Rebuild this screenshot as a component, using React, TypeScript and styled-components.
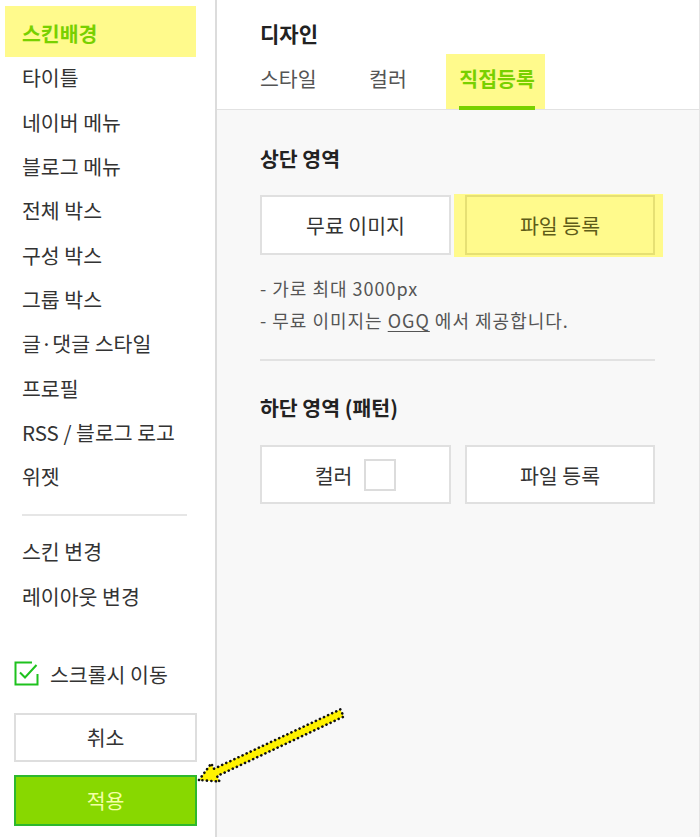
import React from "react";
import styled, { createGlobalStyle, css } from "styled-components";

const GlobalStyle = createGlobalStyle`
  html, body {
    margin: 0;
    padding: 0;
    background: #ffffff;
  }
  body {
    font-family: "Noto Sans CJK KR", "Noto Sans", sans-serif;
    color: #333333;
  }
  * {
    box-sizing: border-box;
  }
`;

const GREEN = "#78d000";
const MARK = "#fffa8c";

const mainMenu = [
  "스킨배경",
  "타이틀",
  "네이버 메뉴",
  "블로그 메뉴",
  "전체 박스",
  "구성 박스",
  "그룹 박스",
  "글·댓글 스타일",
  "프로필",
  "RSS / 블로그 로고",
  "위젯",
];

const subMenu = ["스킨 변경", "레이아웃 변경"];

const tabs = ["스타일", "컬러", "직접등록"];

export default function App() {
  return (
    <>
      <GlobalStyle />
      <Page>
        <Sidebar>
          <Menu>
            {mainMenu.map((label, i) => (
              <MenuItem key={label} active={i === 0}>
                <Label>{label}</Label>
              </MenuItem>
            ))}
          </Menu>
          <SideDivider />
          <SubMenu>
            {subMenu.map((label) => (
              <MenuItem key={label}>
                <Label>{label}</Label>
              </MenuItem>
            ))}
          </SubMenu>
          <CheckRow>
            <svg width="26" height="25" viewBox="0 0 26 25">
              <path
                d="M18 1.5 H1.5 V23.5 H23.5 V13"
                fill="none"
                stroke="#1ec21e"
                strokeWidth="2"
              />
              <path
                d="M6 11.5 L11 16.5 L22.5 4"
                fill="none"
                stroke="#1ec21e"
                strokeWidth="2"
              />
            </svg>
            <span>스크롤시 이동</span>
          </CheckRow>
          <SideButton>취소</SideButton>
          <SideButton primary>적용</SideButton>
        </Sidebar>

        <Main>
          <Header>
            <Title>디자인</Title>
            <Tabs>
              {tabs.map((t, i) => (
                <Tab key={t} active={i === 2}>
                  <Label>{t}</Label>
                </Tab>
              ))}
            </Tabs>
          </Header>

          <Content>
            <SectionTitle>상단 영역</SectionTitle>
            <ButtonRow>
              <OptionButton>무료 이미지</OptionButton>
              <OptionButton marked>
                <Label>파일 등록</Label>
              </OptionButton>
            </ButtonRow>
            <Notes>
              <li>- 가로 최대 3000px</li>
              <li>
                - 무료 이미지는 <u>OGQ</u> 에서 제공합니다.
              </li>
            </Notes>
            <Divider />
            <SectionTitle second>하단 영역 (패턴)</SectionTitle>
            <ButtonRow bottom>
              <OptionButton>
                컬러
                <Swatch />
              </OptionButton>
              <OptionButton>파일 등록</OptionButton>
            </ButtonRow>
          </Content>
        </Main>

        <Arrow width="700" height="837" viewBox="0 0 700 837">
          <polygon
            points="199,780 211.3,763.4 213.7,768.9 340.3,709.4 343.7,716.6 217.1,776.1 219.5,781.6"
            fill="#fff200"
            stroke="#111"
            strokeWidth="2.6"
            strokeDasharray="0.1 4.4"
            strokeLinecap="round"
            strokeLinejoin="round"
          />
        </Arrow>
      </Page>
    </>
  );
}

const Page = styled.div`
  position: relative;
  display: flex;
  width: 700px;
  height: 837px;
  overflow: hidden;
`;

const Sidebar = styled.aside`
  width: 217px;
  flex-shrink: 0;
  display: flex;
  flex-direction: column;
  padding: 0 18px 0 14px;
  border-right: 2px solid #dcdcdc;
  background: #ffffff;
`;

const Menu = styled.ul`
  list-style: none;
  margin: 0 -18px 0 -14px;
  padding: 11px 0 0;
`;

const SubMenu = styled(Menu)`
  padding-top: 13px;
`;

const Label = styled.span`
  position: relative;
`;

const MenuItem = styled.li<{ active?: boolean }>`
  position: relative;
  height: 44.3px;
  display: flex;
  align-items: center;
  padding-left: 22px;
  font-size: 20.5px;
  color: #333333;
  white-space: nowrap;

  ${(p) =>
    p.active &&
    css`
      color: ${GREEN};
      font-weight: 700;
      &::before {
        content: "";
        position: absolute;
        left: 5px;
        right: 19px;
        top: -5px;
        height: 51px;
        background: ${MARK};
      }
    `}
`;

const SideDivider = styled.hr`
  margin: 16px 10px 0 8px;
  border: none;
  height: 2px;
  background: #e6e6e6;
`;

const CheckRow = styled.label`
  display: flex;
  align-items: center;
  gap: 10px;
  height: 30px;
  margin-top: 41px;
  font-size: 20.5px;
  color: #333333;
`;

const SideButton = styled.button<{ primary?: boolean }>`
  width: 183px;
  height: 49px;
  margin-top: 24px;
  font-family: inherit;
  font-size: 20.5px;
  color: #333333;
  background: #ffffff;
  border: 2px solid #dedede;

  ${(p) =>
    p.primary &&
    css`
      height: 51px;
      margin-top: 13px;
      color: #f4ffa6;
      background: #88d800;
      border: 2px solid #2db82d;
    `}
`;

const Main = styled.main`
  flex: 1;
  display: flex;
  flex-direction: column;
  background: #f8f8f8;
  border-right: 1px solid #e4e4e4;
`;

const Header = styled.header`
  height: 110px;
  padding-left: 43px;
  background: #ffffff;
  border-bottom: 1px solid #e2e2e2;
  display: flex;
  flex-direction: column;
`;

const Title = styled.h1`
  margin: 20px 0 0;
  font-size: 21px;
  line-height: 26px;
  font-weight: 700;
  color: #222222;
`;

const Tabs = styled.nav`
  display: flex;
  gap: 52.5px;
  margin-top: 8px;
  height: 55px;
`;

const Tab = styled.div<{ active?: boolean }>`
  position: relative;
  display: flex;
  align-items: center;
  padding-bottom: 7px;
  font-size: 20.5px;
  color: #555555;

  ${(p) =>
    p.active &&
    css`
      color: ${GREEN};
      font-weight: 700;
      &::before {
        content: "";
        position: absolute;
        left: -13px;
        right: -10px;
        top: 0;
        bottom: 0;
        background: ${MARK};
      }
      &::after {
        content: "";
        position: absolute;
        left: 0;
        right: 0;
        bottom: -1px;
        height: 4px;
        background: ${GREEN};
      }
    `}
`;

const Content = styled.section`
  padding: 0 44px 0 43px;
`;

const SectionTitle = styled.h2<{ second?: boolean }>`
  margin: ${(p) => (p.second ? "33px" : "35px")} 0 0;
  font-size: 20.5px;
  line-height: 26px;
  font-weight: 700;
  color: #222222;
`;

const ButtonRow = styled.div<{ bottom?: boolean }>`
  display: grid;
  grid-template-columns: 191px 190px;
  gap: 14px;
  isolation: isolate;
  margin-top: ${(p) => (p.bottom ? "25px" : "24px")};
  height: ${(p) => (p.bottom ? "59px" : "60px")};
`;

const OptionButton = styled.button<{ marked?: boolean }>`
  position: relative;
  display: flex;
  align-items: center;
  justify-content: center;
  gap: 12px;
  font-family: inherit;
  font-size: 20.5px;
  color: #333333;
  background: #ffffff;
  border: 2px solid #e0e0e0;

  ${(p) =>
    p.marked &&
    css`
      color: #5e5c18;
      background: ${MARK};
      border-color: #e6e074;
      &::before {
        content: "";
        position: absolute;
        left: -13px;
        right: -10px;
        top: -3px;
        bottom: -4px;
        background: ${MARK};
        z-index: -1;
      }
    `}
`;

const Swatch = styled.span`
  width: 32px;
  height: 32px;
  background: #ffffff;
  border: 2px solid #dcdcdc;
`;

const Notes = styled.ul`
  list-style: none;
  margin: 17px 0 0;
  padding: 0;
  font-size: 18px;
  letter-spacing: 1px;
  line-height: 32px;
  color: #555555;

  u {
    text-underline-offset: 3px;
  }
`;

const Divider = styled.hr`
  margin: 23px 0 0;
  border: none;
  height: 2px;
  background: #e2e2e2;
`;

const Arrow = styled.svg`
  position: absolute;
  left: 0;
  top: 0;
  pointer-events: none;
`;
